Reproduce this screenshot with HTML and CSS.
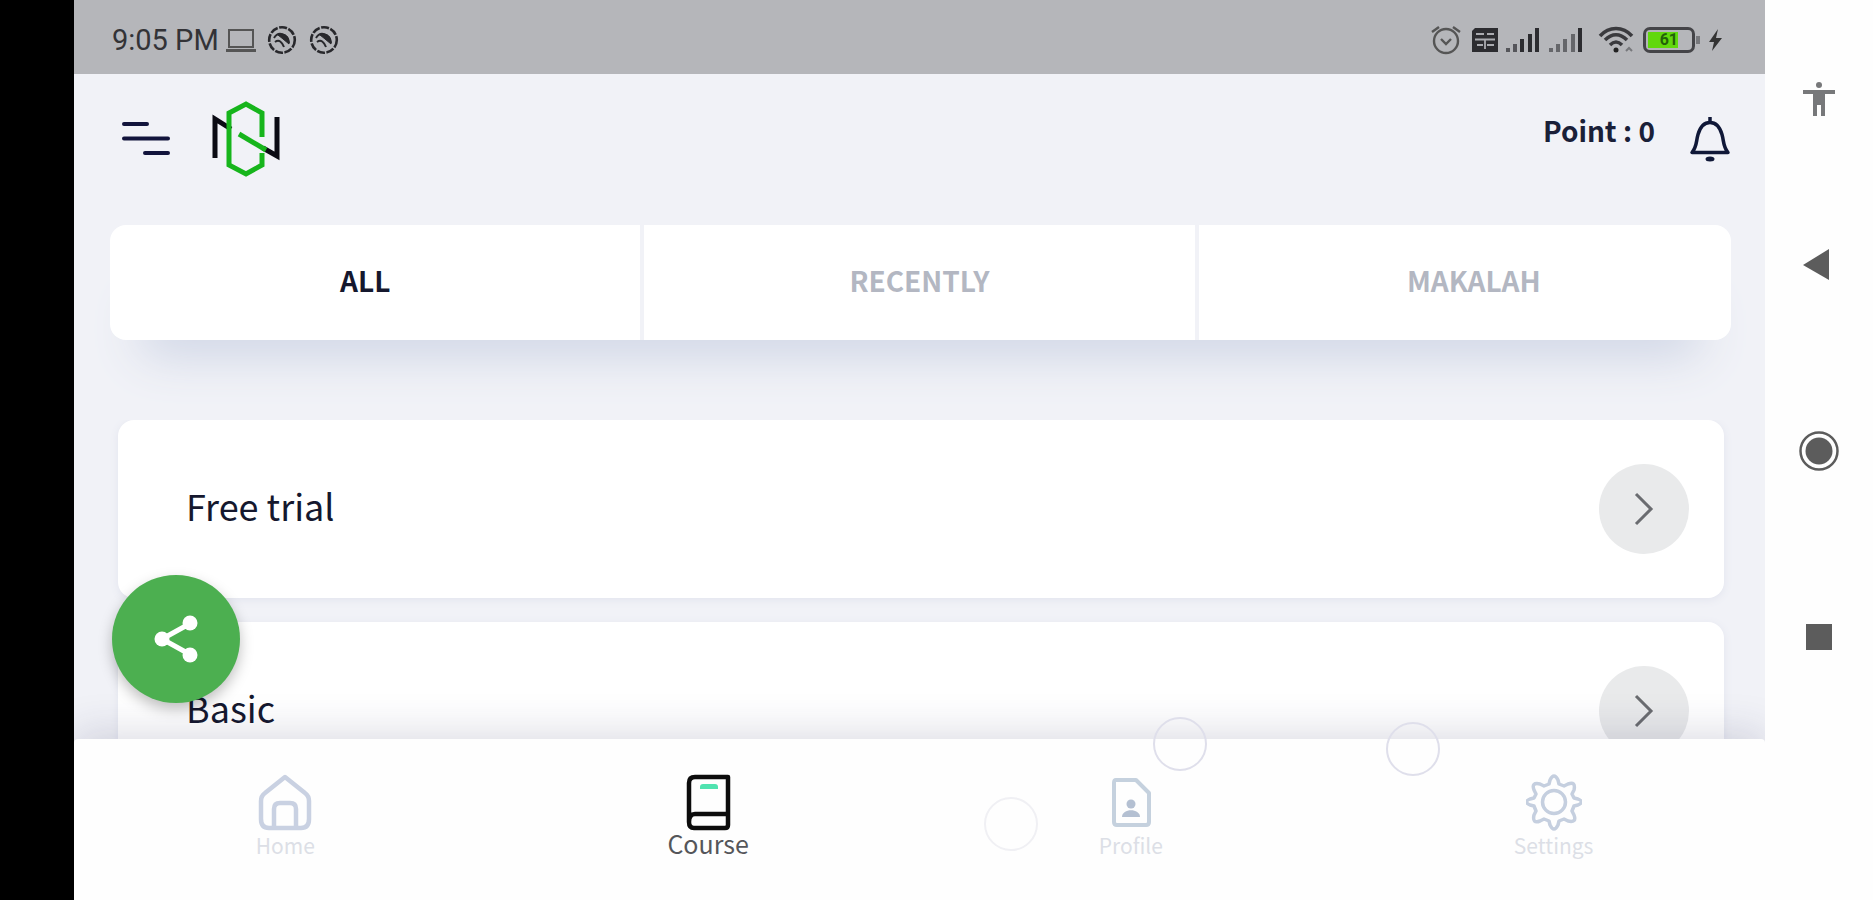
FILE: index.html
```html
<!DOCTYPE html>
<html lang="en">
<head>
<meta charset="utf-8">
<title>Course</title>
<link rel="stylesheet" href="styles.css">
</head>
<body>
<div class="cutout"></div>
<div class="app">
  <div class="status">
    <span class="clock">9:05 PM</span>
    <div class="status-left">
      <svg width="32" height="28" viewBox="0 0 32 28" fill="none" stroke="#555" stroke-width="2"><rect x="4" y="4" width="24" height="17"/><path d="M1 24.500h30" stroke-width="3"/></svg>
      <svg width="30" height="30" viewBox="0 0 30 30" fill="none" stroke="#28282c"><circle cx="15" cy="15" r="12.800" stroke-width="2.600" stroke-dasharray="8 1.500"/><path d="M7 13c4-7 13-5 15 5M8 17c4-3 7 0 9 5" stroke-width="2"/><path d="M11 10c7-3 12 2 11 9l-6-5z" fill="#28282c"/></svg>
      <svg width="30" height="30" viewBox="0 0 30 30" fill="none" stroke="#28282c"><circle cx="15" cy="15" r="12.800" stroke-width="2.600" stroke-dasharray="8 1.500"/><path d="M7 13c4-7 13-5 15 5M8 17c4-3 7 0 9 5" stroke-width="2"/><path d="M11 10c7-3 12 2 11 9l-6-5z" fill="#28282c"/></svg>
    </div>
    <div class="status-right">
      <svg width="32" height="30" viewBox="0 0 32 30" fill="none" stroke="#555" stroke-width="2.400"><circle cx="16" cy="16" r="12"/><path d="M2 7l7-5M30 7l-7-5M11 14l5 5 5-5"/></svg>
      <svg width="28" height="26" viewBox="0 0 28 26"><path d="M4 1h23v24H1V4z" fill="#2c2c30"/><path d="M5 7h8M16 7h7M4 12.500h20M6 18h6M16 18h7M14 13v9" stroke="#aaabb0" stroke-width="1.800"/></svg>
      <svg class="first-signal" width="34" height="26" viewBox="0 0 34 26" fill="#2c2c30"><path d="M0 21h4v4H0zM7 17h4v8H7z" fill="#55555a"/><path d="M14 12h4v13h-4zM22 7h4v18h-4zM29 1h4v24h-4z"/></svg>
      <svg class="second-signal" width="34" height="26" viewBox="0 0 34 26" fill="#65666a"><path d="M0 21h4v4H0zM7 17h4v8H7zM14 12h4v13h-4zM22 7h4v18h-4z"/><path d="M29 1h4v24h-4z" fill="#2c2c30"/></svg>
      <svg width="36" height="30" viewBox="0 0 36 30" fill="none" stroke="#3a3a3e" stroke-width="3.500"><path d="M2 11c9-10 23-10 32 0M7 15c7-7 15-7 22 0M12 20c4-4 8-4 12 0"/><circle cx="18" cy="25" r="2.500" fill="#222" stroke="none"/><path d="M28 26l3-3 3 3" stroke="#77787c" stroke-width="2"/></svg>
      <div class="battery"><span class="charge">61</span></div>
      <svg width="15" height="22" viewBox="0 0 15 22"><path d="M10 0L1 13h5L4 22l10-13H8z" fill="#333"/></svg>
    </div>
  </div>

  <header class="header">
    <button class="icon-button" aria-label="Menu"><svg width="50" height="36" viewBox="0 0 50 36" stroke="#12143c" stroke-width="4" stroke-linecap="round"><path d="M3 3h23M3 17.500h44M24 32h23"/></svg></button>
    <svg class="logo" width="70" height="80" viewBox="0 0 70 80" fill="none"><path d="M4 59V20l16 10M66 18v39L52 49" stroke="#0b0b14" stroke-width="5"/><path d="M51 38V14L35 5 18 14v52l17 9 16-9V54" stroke="#17b51c" stroke-width="5"/><path d="M28 35l27 16" stroke="#17b51c" stroke-width="5"/></svg>
    <span class="points">Point : 0</span>
    <button class="icon-button" aria-label="Notifications"><svg width="42" height="48" viewBox="0 0 42 48" fill="none" stroke="#101838" stroke-width="3.500" stroke-linejoin="round"><path d="M3 37.500h36c-5-6-4-11-6-18-2-7-6-12-12-12S11 12.500 9 19.500c-2 7-1 12-6 18z"/><path d="M21 7V2"/><ellipse cx="21" cy="44" rx="4.500" ry="2.500" fill="#101838" stroke="none"/></svg></button>
  </header>

  <div class="tabs">
    <div class="tab-track">
      <button class="tab tab-active">ALL</button>
      <button class="tab">RECENTLY</button>
      <button class="tab">MAKALAH</button>
    </div>
  </div>

  <main class="courses">
    <a class="course" href="#free"><span class="course-name">Free trial</span><span class="go"><svg width="24" height="36" viewBox="0 0 24 36"><path d="M4 3l15 15L4 33" fill="none" stroke="#6a6c70" stroke-width="3"/></svg></span></a>
    <a class="course" href="#basic"><span class="course-name">Basic</span><span class="go"><svg width="24" height="36" viewBox="0 0 24 36"><path d="M4 3l15 15L4 33" fill="none" stroke="#6a6c70" stroke-width="3"/></svg></span></a>
  </main>

  <nav class="bottom-nav">
    <a class="nav-item" href="#home"><svg width="56" height="58" viewBox="0 0 56 58" fill="none" stroke="#c9d1e2" stroke-width="4.500" stroke-linejoin="round"><path d="M28 4L8 20q-4 3-4 8v18q0 9 8 9h32q8 0 8-9V28q0-5-4-8zM17 55V36q0-6 6-6h10q6 0 6 6v19"/></svg>Home</a>
    <a class="nav-item nav-active" href="#course"><svg width="56" height="58" viewBox="0 0 56 58" fill="none" stroke="#0c0c0c" stroke-width="4.500" stroke-linejoin="round"><path d="M15 4h33v48q0 3-3 3H14q-5 0-5-6V10q0-6 6-6zM9 49q0-8 6-8h33"/><path d="M20 16v-2q0-3 3-3h12q3 0 3 3v2z" fill="#50e3b0" stroke="none"/></svg>Course</a>
    <a class="nav-item" href="#profile"><svg width="56" height="58" viewBox="0 0 56 58" fill="none" stroke="#c5d1de" stroke-width="4" stroke-linejoin="round"><path d="M13 7h20l13 13v29q0 3-3 3H14q-3 0-3-3V10q0-3 2-3z"/><circle cx="28" cy="31" r="4.500" fill="#b4c0d2" stroke="none"/><path d="M19 44c0-9 18-9 18 0z" fill="#b4c0d2" stroke="none"/></svg>Profile</a>
    <a class="nav-item" href="#settings"><svg width="56" height="58" viewBox="0 0 56 58" fill="none" stroke="#c5cfdf" stroke-width="3.500" stroke-linejoin="round"><path d="M24 7q4-8 8 0l1 4 5 2 4-2q8-3 6 6l-2 4 2 4 4 1q7 3 0 6l-4 1-2 5 2 4q3 8-6 6l-4-2-5 2-1 4q-4 8-8 0l-1-4-5-2-4 2q-8 3-6-6l2-4-2-5-4-1q-7-3 0-6l4-1 2-4-2-4q-3-8 6-6l4 2 5-2z"/><circle cx="28" cy="29" r="11.500"/></svg>Settings</a>
    <span class="bubble bubble-a"></span>
    <span class="bubble bubble-b"></span>
    <span class="bubble bubble-c"></span>
  </nav>

  <button class="share" aria-label="Share"><svg width="46" height="50" viewBox="0 0 46 50" fill="#fff"><path d="M38 9L9 25l29 16" fill="none" stroke="#fff" stroke-width="5"/><circle cx="37" cy="9" r="7.500"/><circle cx="9" cy="25" r="7.500"/><circle cx="37" cy="41" r="7.500"/></svg></button>
</div>

<aside class="system">
  <button class="icon-button assist" aria-label="Accessibility"><svg width="40" height="40" viewBox="0 0 40 40" fill="#77787a"><circle cx="20" cy="6" r="3"/><path d="M4 11h32v4H26v22h-4V26h-4v11h-4V15H4z"/></svg></button>
  <button class="icon-button" aria-label="Back"><svg width="40" height="40" viewBox="0 0 40 40"><path d="M30 4v31L4 20z" fill="#5c5c5c"/></svg></button>
  <button class="icon-button" aria-label="Home screen"><svg width="40" height="40" viewBox="0 0 40 40"><circle cx="20" cy="20" r="18.500" fill="none" stroke="#5c5c5c" stroke-width="2.500"/><circle cx="20" cy="20" r="13.500" fill="#5c5c5c"/></svg></button>
  <button class="icon-button" aria-label="Recent apps"><svg width="40" height="40" viewBox="0 0 40 40"><path d="M7 7h26v26H7z" fill="#5c5c5c"/></svg></button>
</aside>
</body>
</html>
```

FILE: styles.css
```css
* { box-sizing: border-box; }

body {
  margin: 0;
  height: 100vh;
  display: flex;
  overflow: hidden;
  background: #fefefe;
  font-family: "Noto Sans CJK JP", "Noto Sans", sans-serif;
  color: #15182e;
}

button {
  padding: 0;
  border: 0;
  background: none;
  font: inherit;
  color: inherit;
}

a { color: inherit; text-decoration: none; }
svg { display: block; flex: none; }

.cutout { width: 74px; background: #000; }

.app {
  position: relative;
  flex: 1;
  min-width: 0;
  display: flex;
  flex-direction: column;
  background: #f1f2f7;
}

.status {
  flex: none;
  height: 74px;
  padding: 6px 42px 0 38px;
  display: flex;
  align-items: center;
  background: #b5b6ba;
}

.clock {
  font-family: Roboto, sans-serif;
  font-size: 29px;
  color: #333337;
}

.status-left { display: flex; align-items: center; gap: 12px; margin-left: 6px; }
.status-left svg:first-child { margin-right: -2px; }
.status-right { display: flex; align-items: center; gap: 9px; margin-left: auto; }
.first-signal { margin-left: -2px; }
.second-signal { margin-right: 6px; }

.battery {
  position: relative;
  width: 52px;
  height: 26px;
  margin-right: 4px;
  padding: 2px;
  border: 3px solid #444448;
  border-radius: 7px;
}

.battery::after {
  content: "";
  position: absolute;
  right: -8px;
  top: 6px;
  width: 4px;
  height: 8px;
  background: #77787c;
}

.charge {
  display: block;
  width: 30px;
  height: 16px;
  background: #62d80e;
  color: #24600a;
  font: bold 16px/16px Roboto, sans-serif;
  text-align: right;
}

.header {
  flex: none;
  height: 151px;
  padding: 0 34px 22px 47px;
  display: flex;
  align-items: center;
}

.logo { margin-left: 40px; }

.points {
  margin: 0 34px 18px auto;
  font-size: 28px;
  line-height: 32px;
  font-weight: 700;
  color: #1a2038;
}

.tabs {
  flex: none;
  margin: 0 34px 0 36px;
  border-radius: 16px;
  background: #fff;
  box-shadow: 0 46px 50px -32px #ccd3e4;
}

.tab-track {
  display: flex;
  margin: 0 -18px 0 -20px;
}

.tab {
  flex: 1;
  height: 115px;
  padding-bottom: 6px;
  font-size: 28px;
  font-weight: 700;
  color: #b3b7c2;
}

.tab + .tab { border-left: 4px solid #f1f2f7; }
.tab-active { color: #15182e; }

.courses {
  flex: 1;
  min-height: 0;
  overflow: hidden;
  margin-top: 80px;
  padding: 0 41px 0 44px;
  display: flex;
  flex-direction: column;
  gap: 24px;
}

.course {
  flex: none;
  height: 178px;
  padding: 0 35px 0 68px;
  display: flex;
  align-items: center;
  justify-content: space-between;
  border-radius: 16px;
  background: #fff;
  box-shadow: 0 2px 8px #e2e4ee;
  font-size: 36px;
}

.course-name { padding-bottom: 8px; }

.go {
  width: 90px;
  height: 90px;
  display: flex;
  align-items: center;
  justify-content: center;
  border-radius: 50%;
  background: #e9eaeb;
}

.bottom-nav {
  position: relative;
  flex: none;
  height: 161px;
  padding-top: 34px;
  display: flex;
  background: #fefefe;
  border-radius: 4px 4px 0 0;
  box-shadow: 0 -6px 40px #28285a2b;
  clip-path: inset(-80px 0 0 0);
}

.nav-item {
  flex: 1;
  display: flex;
  flex-direction: column;
  align-items: center;
  font-size: 21px;
  line-height: 28px;
  color: #dcdfe6;
}

.nav-active { font-size: 25px; line-height: 24px; color: #55565a; }

.bubble {
  position: absolute;
  width: 54px;
  height: 54px;
  border: 2px solid #dfdfeb;
  border-radius: 50%;
}

.bubble-a { left: 53.800%; top: 58px; border-color: #f0f0f4; }
.bubble-b { left: 63.800%; top: -22px; }
.bubble-c { left: 77.600%; top: -17px; }

.share {
  position: absolute;
  left: 38px;
  bottom: 197px;
  width: 128px;
  height: 128px;
  display: flex;
  align-items: center;
  justify-content: center;
  border-radius: 50%;
  background: #4caf50;
  box-shadow: 0 6px 14px #00000040;
}

.system {
  flex: none;
  width: 108px;
  padding-top: 79px;
  display: flex;
  flex-direction: column;
  align-items: center;
  gap: 146px;
}

.assist { margin-bottom: -20px; }
```
